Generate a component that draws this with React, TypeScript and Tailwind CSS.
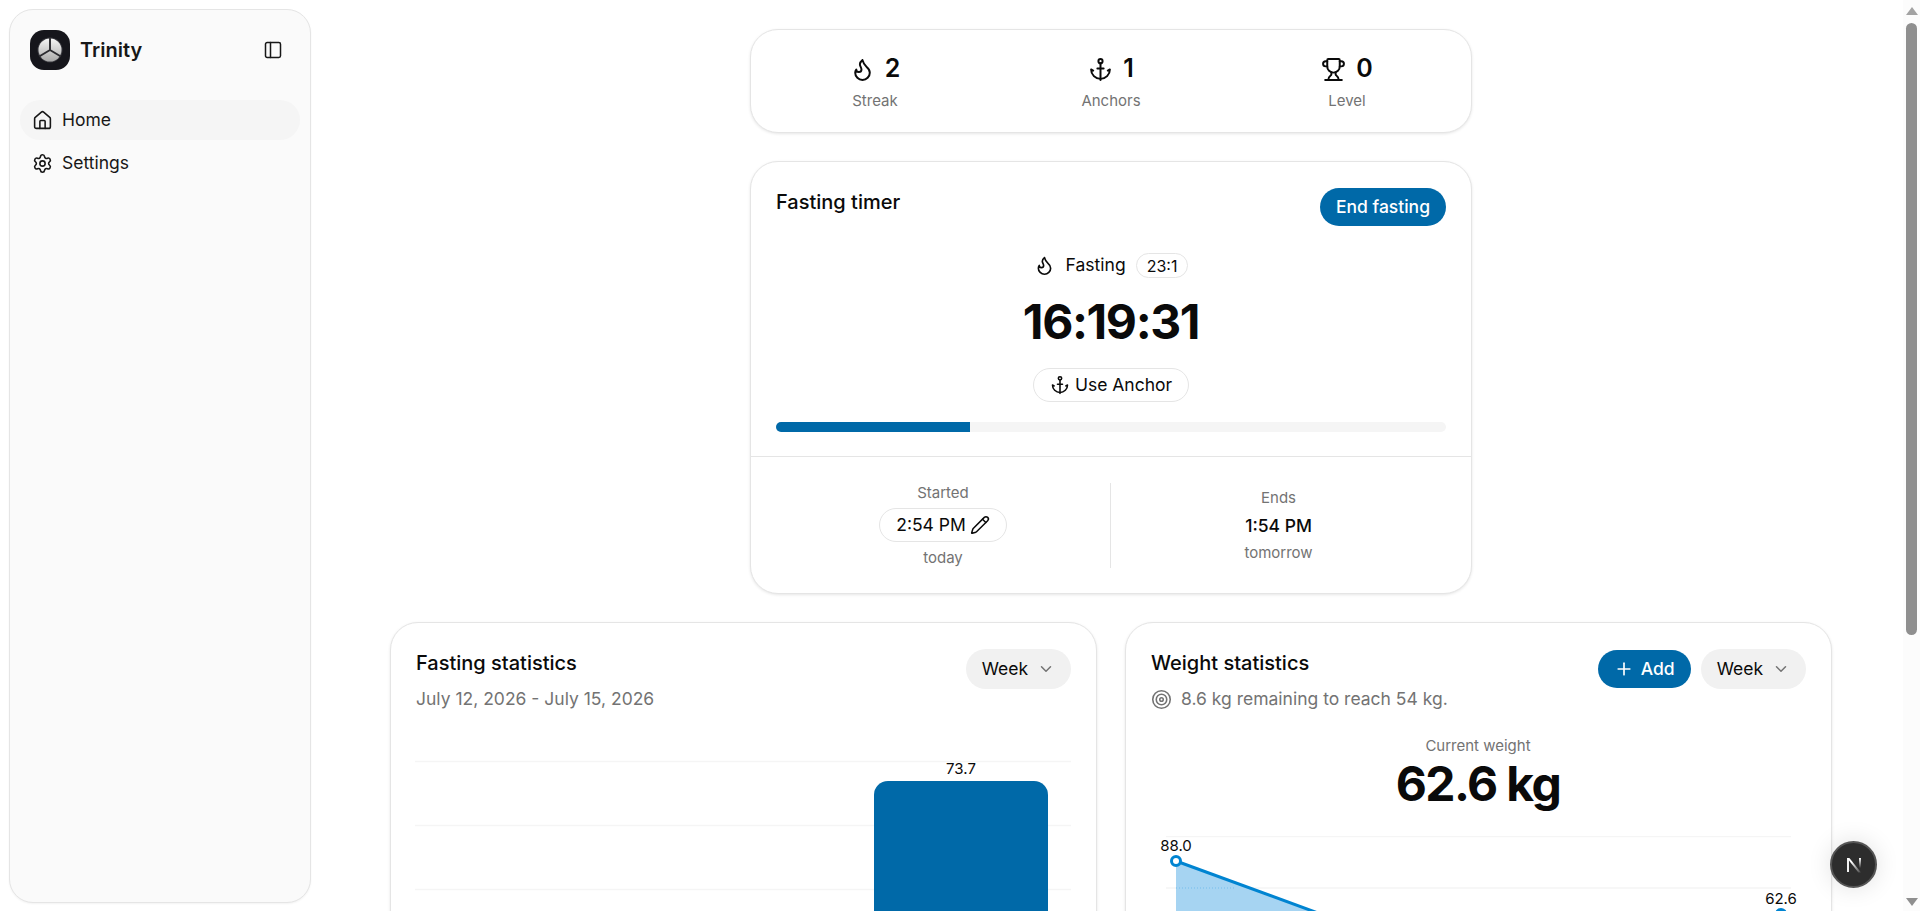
import React from 'react';
import { Anchor, ChevronDown, Flame, Home, PanelLeft, Pencil, Plus, Settings, Target, Trophy } from 'lucide-react';

const font = 'font-["Inter","Liberation_Sans",sans-serif]';

const Card: React.FC<{ className?: string; children: React.ReactNode }> = ({ className = '', children }) => (
  <div className={`rounded-[28px] border border-neutral-200 bg-white shadow-[0_1px_3px_rgba(0,0,0,0.1)] ${className}`}>{children}</div>
);

const Stat = ({ icon, value, label }: { icon: React.ReactNode; value: number; label: string }) => (
  <div className="flex flex-col items-center">
    <div className="flex h-8 items-center gap-[10px] text-[25px] font-semibold text-neutral-950">
      {icon}
      <span>{value}</span>
    </div>
    <div className="mt-[6px] text-[15px] leading-5 text-neutral-500">{label}</div>
  </div>
);

const WeekSelect = () => (
  <button className="flex h-10 items-center gap-[9px] rounded-full bg-[#f1f1f1] px-4 text-[17.5px] text-neutral-950">
    Week
    <ChevronDown size={18} className="text-neutral-500" />
  </button>
);

const Sidebar = () => (
  <aside className="w-[319px] shrink-0 pt-[9px] pr-[8px] pb-[8px] pl-[9px]">
    <div className="h-full rounded-[24px] border border-neutral-200 bg-neutral-50 px-[10px] py-5 shadow-[0_1px_2px_rgba(0,0,0,0.05)]">
      <div className="flex h-10 items-center pl-[10px] pr-[17px]">
        <svg viewBox="0 0 40 40" className="h-10 w-10 shrink-0">
          <rect width="40" height="40" rx="14" fill="#15151b" />
          <defs>
            <linearGradient id="disc" x1="0" y1="0" x2="0" y2="1">
              <stop offset="0" stopColor="#f6f6f6" />
              <stop offset="1" stopColor="#a8a8a8" />
            </linearGradient>
          </defs>
          <circle cx="20" cy="20" r="12.5" fill="#3a3a40" />
          <circle cx="20" cy="20" r="11.5" fill="url(#disc)" />
          <path d="M20 20V8.5M20 20l-10 6M20 20l10 6" stroke="#2b2b30" strokeWidth="1.9" strokeLinecap="round" fill="none" />
        </svg>
        <span className="ml-[10px] flex-1 text-[20px] font-semibold text-neutral-900">Trinity</span>
        <PanelLeft size={20} strokeWidth={1.8} className="text-neutral-900" />
      </div>
      <nav className="mt-[30px] flex flex-col gap-[3px]">
        <div className="flex h-10 items-center gap-[9px] rounded-full bg-neutral-100 px-[12px] text-[17.5px] text-neutral-900">
          <Home size={21} strokeWidth={1.8} />
          Home
        </div>
        <div className="flex h-10 items-center gap-[9px] rounded-full px-[12px] text-[17.5px] text-neutral-900">
          <Settings size={21} strokeWidth={1.8} />
          Settings
        </div>
      </nav>
    </div>
  </aside>
);

const StatsCard = () => (
  <Card className="grid h-[104px] grid-cols-3 items-start px-[6px] pt-[23px]">
    <Stat icon={<Flame size={25} strokeWidth={1.9} />} value={2} label="Streak" />
    <Stat icon={<Anchor size={25} strokeWidth={1.9} />} value={1} label="Anchors" />
    <Stat icon={<Trophy size={25} strokeWidth={1.9} />} value={0} label="Level" />
  </Card>
);

const TimerCard = () => (
  <Card className="mt-7">
    <div className="pt-[26px] pr-[25px] pb-[24px] pl-[25px]">
      <div className="flex items-start justify-between">
        <h2 className="text-[20px] font-medium leading-[28px] text-neutral-950">Fasting timer</h2>
        <button className="h-[38px] rounded-full bg-[#0069a8] px-4 text-[17.5px] font-medium text-white">End fasting</button>
      </div>
      <div className="mt-[27px] flex h-[25px] items-center justify-center text-[17.5px] text-neutral-950">
        <Flame size={21} strokeWidth={1.9} />
        <span className="ml-[11px]">Fasting</span>
        <span className="ml-[10px] flex h-[25px] items-center rounded-full border border-neutral-200 px-[10px] text-[16px]">23:1</span>
      </div>
      <div className="mt-[14px] text-center text-[48px] font-bold leading-[60px] tracking-[-1.4px] text-neutral-950">16:19:31</div>
      <div className="mt-[16px] flex justify-center">
        <button className="flex h-[34px] items-center gap-[5px] rounded-full border border-neutral-200 px-4 text-[17.5px] text-neutral-950">
          <Anchor size={20} strokeWidth={1.9} />
          Use Anchor
        </button>
      </div>
      <div className="mt-[20px] h-[10px] overflow-hidden rounded-full bg-neutral-100">
        <div className="h-full bg-[#0069a8]" style={{ width: '29%' }} />
      </div>
    </div>
    <div className="border-t border-neutral-200 pt-[26px] pr-[25px] pb-[25px] pl-[25px]">
      <div className="grid grid-cols-2">
        <div className="flex flex-col items-center border-r border-neutral-200">
          <span className="text-[15px] leading-5 text-neutral-500">Started</span>
          <button className="mt-[5px] flex h-[34px] items-center gap-1 rounded-full border border-neutral-200 px-4 text-[17.5px] text-neutral-950">
            2:54 PM
            <Pencil size={20} strokeWidth={1.8} />
          </button>
          <span className="mt-[6px] text-[15px] leading-5 text-neutral-500">today</span>
        </div>
        <div className="flex flex-col items-center justify-center">
          <span className="text-[15px] leading-5 text-neutral-500">Ends</span>
          <span className="mt-[6px] text-[17.5px] font-medium leading-6 text-neutral-950">1:54 PM</span>
          <span className="mt-[5px] text-[15px] leading-5 text-neutral-500">tomorrow</span>
        </div>
      </div>
    </div>
  </Card>
);

const FastingStats = () => (
  <Card className="h-[700px] pt-[26px] pr-[25px] pl-[24px]">
    <div className="flex items-start justify-between">
      <div className="pl-px">
        <h2 className="text-[20px] font-medium leading-[28px] text-neutral-950">Fasting statistics</h2>
        <p className="mt-[10px] text-[17.5px] leading-6 text-neutral-500">July 12, 2026 - July 15, 2026</p>
      </div>
      <WeekSelect />
    </div>
    <svg viewBox="0 -6 656 306" className="mt-[44px] block h-[306px] w-full">
      <path d="M0 .5H656M0 64.5H656M0 128.5H656M0 192.5H656" stroke="#f5f5f5" strokeWidth="1.5" />
      <path d="M459 34a14 14 0 0 1 14-14h146a14 14 0 0 1 14 14V300H459Z" fill="#0069a8" />
      <text x="546" y="13" textAnchor="middle" fontSize="15" fill="#0a0a0a">73.7</text>
    </svg>
  </Card>
);

const WeightStats = () => (
  <Card className="h-[700px] pt-[26px] pr-[25px] pl-[24px]">
    <div className="flex items-start justify-between">
      <div className="pl-px">
        <h2 className="text-[20px] font-medium leading-[28px] text-neutral-950">Weight statistics</h2>
        <p className="mt-[10px] flex items-center gap-[9px] text-[17.5px] leading-6 text-neutral-500">
          <Target size={21} strokeWidth={1.8} />
          8.6 kg remaining to reach 54 kg.
        </p>
      </div>
      <div className="flex items-center gap-[10px]">
        <button className="flex h-[38px] items-center gap-[7px] rounded-full bg-[#0069a8] px-4 text-[17.5px] font-medium text-white">
          <Plus size={20} />
          Add
        </button>
        <WeekSelect />
      </div>
    </div>
    <div className="mt-[25px] text-center text-[15px] leading-5 text-neutral-500">Current weight</div>
    <div className="mt-[4px] text-center text-[48px] font-bold leading-[48px] tracking-[-1.6px] text-neutral-950">62.6 kg</div>
    <svg viewBox="0 0 656 300" className="mt-[28px] block h-[300px] w-full">
      <path d="M16 .5H641M16 52H641M16 104H641" stroke="#f5f5f5" strokeWidth="1.5" />
      <path d="M26 25L400 162V300H26Z" fill="#a6d4f2" />
      <path d="M26 52H86" stroke="#74bdec" strokeWidth="1" strokeDasharray="1 2" />
      <path d="M26 25L400 162" stroke="#0084d1" strokeWidth="3" fill="none" />
      <circle cx="26" cy="25" r="4.5" fill="#fff" stroke="#0084d1" strokeWidth="3" />
      <circle cx="631" cy="78" r="4.5" fill="#fff" stroke="#0084d1" strokeWidth="3" />
      <text x="26" y="15" textAnchor="middle" fontSize="15" fill="#0a0a0a">88.0</text>
      <text x="631" y="68" textAnchor="middle" fontSize="15" fill="#0a0a0a">62.6</text>
    </svg>
  </Card>
);

const NextBadge = () => (
  <button className="absolute right-[26px] bottom-[23px] flex h-[47px] w-[47px] items-center justify-center rounded-full border-2 border-[#555] bg-[#2d2d2d] shadow-[0_0_24px_rgba(0,0,0,0.12)]">
    <svg viewBox="0 0 16 16" className="h-4 w-4">
      <defs>
        <linearGradient id="nfade" x1="0" y1="0" x2="1" y2="1">
          <stop offset="0.3" stopColor="#fff" />
          <stop offset="1" stopColor="#fff" stopOpacity="0.1" />
        </linearGradient>
        <linearGradient id="nfade2" x1="0" y1="0" x2="0" y2="1">
          <stop offset="0" stopColor="#fff" />
          <stop offset="1" stopColor="#fff" stopOpacity="0" />
        </linearGradient>
      </defs>
      <path d="M1 1h2v14H1z" fill="#f2f2f2" />
      <path d="M1 1h2.4L15 15.5h-2.6z" fill="url(#nfade)" />
      <rect x="13" y="1" width="2" height="10" fill="url(#nfade2)" />
    </svg>
  </button>
);

const FakeScrollbar = () => (
  <div className="flex w-[17px] shrink-0 flex-col items-center bg-[#fcfcfc] pt-[7px] pb-[5px]">
    <div className="h-0 w-0 border-x-[6px] border-b-[8px] border-x-transparent border-b-[#a3a3a3]" />
    <div className="mt-[8px] h-[612px] w-[11px] rounded-full bg-[#8f8f8f]" />
    <div className="flex-1" />
    <div className="h-0 w-0 border-x-[6px] border-t-[8px] border-x-transparent border-t-[#8f8f8f]" />
  </div>
);

export default function App() {
  return (
    <div className={`flex h-[911px] overflow-hidden bg-white ${font}`}>
      <Sidebar />
      <main className="relative min-w-0 flex-1 overflow-hidden">
        <div className="mx-auto w-[722px] pt-[29px]">
          <StatsCard />
          <TimerCard />
        </div>
        <div className="mx-auto mt-[28px] grid w-[1442px] grid-cols-2 gap-[28px]">
          <FastingStats />
          <WeightStats />
        </div>
        <NextBadge />
      </main>
      <FakeScrollbar />
    </div>
  );
}
